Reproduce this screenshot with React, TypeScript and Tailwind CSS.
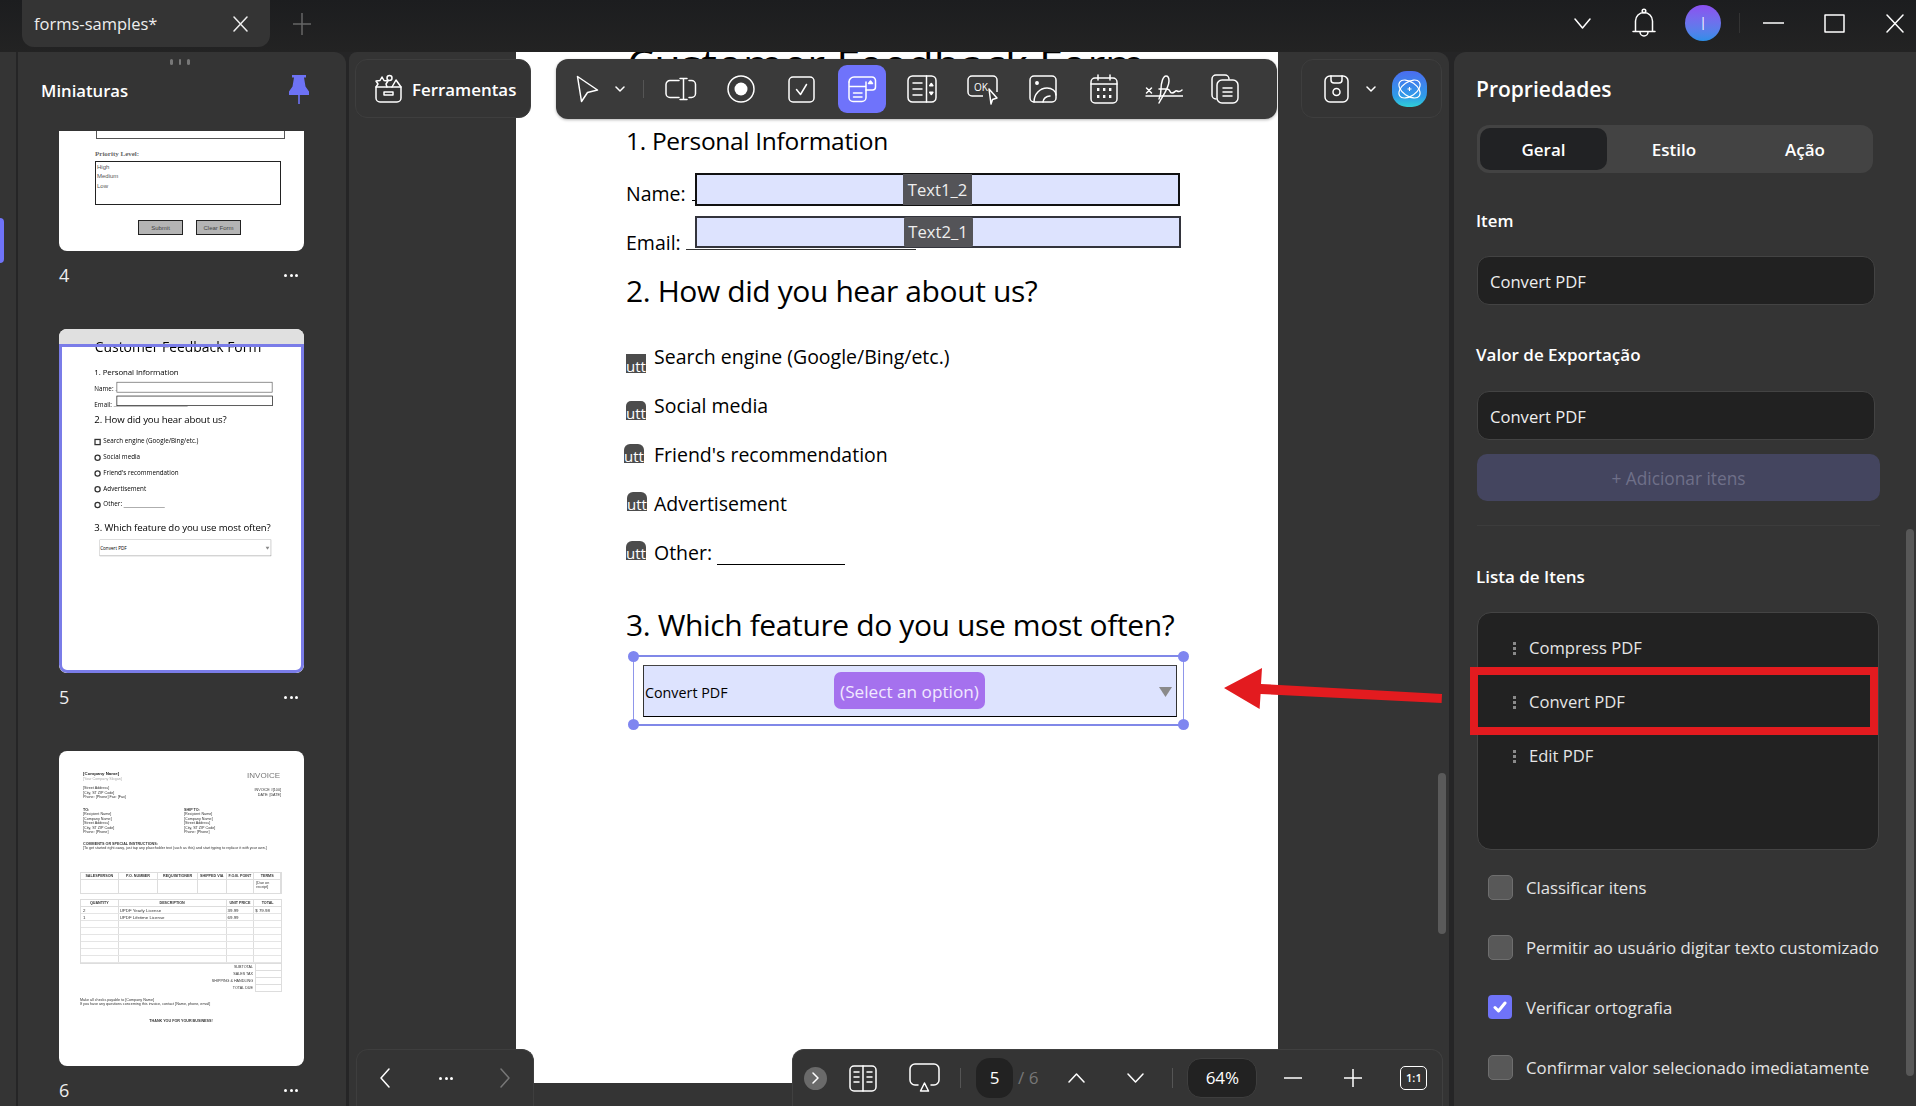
import React from "react";

const S = ({ w, h, children, className = "" }: { w: number; h: number; children: React.ReactNode; className?: string }) => (
  <svg width={w} height={h} viewBox={`0 0 ${w} ${h}`} fill="none" stroke="currentColor" strokeWidth={1.5} strokeLinecap="round" strokeLinejoin="round" className={`shrink-0 ${className}`}>
    {children}
  </svg>
);

const Chevron = ({ w = 10, h = 6, up = false, cls = "" }: { w?: number; h?: number; up?: boolean; cls?: string }) => (
  <S w={w} h={h} className={cls}>
    {up ? <path d={`M1 ${h - 1}L${w / 2} 1L${w - 1} ${h - 1}`} /> : <path d={`M1 1L${w / 2} ${h - 1}L${w - 1} 1`} />}
  </S>
);

function PageContent({ thumb = false }: { thumb?: boolean }) {
  const rows = [
    ["Search engine (Google/Bing/etc.)", "ml-0 mt-[12px] rounded-none"],
    ["Social media", "ml-0 mt-[8px] rounded-t-[5px]"],
    ["Friend's recommendation", "-ml-[2px] -mt-[3px] rounded-t-[6px]"],
    ["Advertisement", "ml-[1px] -mt-[5px] rounded-t-[6px]"],
    ["Other:", "ml-0 -mt-[5px] rounded-t-[6px]"],
  ];
  return (
    <div className="w-[762px] pl-[110px] text-black">
      <div className="-mt-[17px] h-[60px] whitespace-nowrap pl-[1px] text-[43.3px] leading-[60px]">Customer Feedback Form</div>
      <div className="mt-[28px] h-9 whitespace-nowrap text-[24.5px] leading-9 tracking-[-0.3px]">1. Personal Information</div>
      <div className="mt-[14px] flex h-[33px]">
        <div className="mt-[7px] w-[69px] whitespace-nowrap text-[19.5px] leading-7">
          Name:<span className="ml-[6px] inline-block h-[18px] w-[6px] border-b border-black align-baseline" />
        </div>
        <div className={`relative flex h-[33px] w-[485px] items-center justify-center border-2 ${thumb ? "border-[#555] bg-white" : "border-[#111] bg-[#dde3fe]"}`}>
          {!thumb && <span className="flex h-[31px] w-[69px] items-center justify-center bg-[#545458] pt-[1px] text-[16.6px] text-[#eee]">Text1_2</span>}
        </div>
      </div>
      <div className="mt-[10px] flex h-[32px]">
        <div className="relative mt-[13px] w-[69px] whitespace-nowrap text-[19.5px] leading-7">
          Email:<span className="ml-[5px] inline-block h-[18px] w-[230px] border-b border-[#333] align-baseline" />
        </div>
        <div className={`relative flex h-[32px] w-[486px] items-center justify-center border-2 ${thumb ? "border-black bg-white" : "border-[#33343c] bg-[#dde3fe]"}`}>
          {!thumb && <span className="flex h-[30px] w-[69px] items-center justify-center rounded-[2px] bg-[#545458] text-[16.6px] text-[#eee]">Text2_1</span>}
        </div>
      </div>
      <div className="mt-[21px] h-11 whitespace-nowrap text-[30px] leading-[44px] tracking-[-0.4px]">2. How did you hear about us?</div>
      <div className="mt-[29px] flex flex-col gap-[19px]">
        {rows.map(([t, pos], i) => (
          <div key={t} className="flex h-[30px] items-center whitespace-nowrap text-[19.5px] leading-[30px]">
            <span className="w-7 shrink-0">
              {thumb ? (
                <span className={`mt-[6px] block h-5 w-5 border-[4px] border-[#333] ${i === 0 ? "rounded-none" : "rounded-full"}`} />
              ) : (
                <span className={`${pos} block h-[19px] w-5 overflow-hidden bg-[#4c4c4c] text-center text-[15px] leading-[24px] text-white`}>utt</span>
              )}
            </span>
            <span>{t}</span>
            {t === "Other:" && <span className="ml-[5px] mt-[6px] inline-block h-[18px] w-[128px] border-b border-black" />}
          </div>
        ))}
      </div>
      <div className="mt-[35px] h-11 whitespace-nowrap text-[30px] leading-[44px] tracking-[-0.38px]">3. Which feature do you use most often?</div>
      <div className={`relative ml-[7px] mt-2 h-[71px] w-[551px] pl-[9px] pt-2 ${thumb ? "" : "border-x border-y-2 border-x-[#8f96ea] border-y-[#8088e8]"}`}>
        {!thumb && (
          <>
            <span className="absolute -left-[6px] -top-[6px] h-[11px] w-[11px] rounded-full bg-[#7f86f0]" />
            <span className="absolute -right-[6px] -top-[6px] h-[11px] w-[11px] rounded-full bg-[#7f86f0]" />
            <span className="absolute -bottom-[6px] -left-[6px] h-[11px] w-[11px] rounded-full bg-[#7f86f0]" />
            <span className="absolute -bottom-[6px] -right-[6px] h-[11px] w-[11px] rounded-full bg-[#7f86f0]" />
          </>
        )}
        <div className={`relative flex h-[52px] w-[534px] items-center border-[1.5px] border-x-[#333] border-b-black border-t-[#444] pl-[1px] pt-[3px] text-[14.3px] ${thumb ? "bg-white" : "bg-[#dde3fe]"}`}>
          Convert PDF
          {!thumb && (
            <span className="absolute left-[190px] top-[6px] flex h-[37px] w-[151px] items-center justify-center rounded-[7px] bg-[#a571ee] pt-[3px] text-[17.2px] text-[#f1e9ff]">(Select an option)</span>
          )}
          <svg width="13" height="10" viewBox="0 0 13 10" className="absolute right-[4px] top-[21px]"><path d="M0 0h13L6.5 10z" fill="#8a8a8a" /></svg>
        </div>
      </div>
    </div>
  );
}

function Invoice() {
  const cols1 = ["SALESPERSON", "P.O. NUMBER", "REQUISITIONER", "SHIPPED VIA", "F.O.B. POINT", "TERMS"];
  const w1 = ["w-[38px]", "w-[40px]", "w-[40px]", "w-[29px]", "w-[28px]", "w-[27px]"];
  const body = [
    ["2", "UPDF Yearly License", "39.99", "$ 79.98"],
    ["1", "UPDF Lifetime License", "69.99", ""],
    ["", "", "", ""], ["", "", "", ""], ["", "", "", ""], ["", "", "", ""], ["", "", "", ""], ["", "", "", ""],
  ];
  const totals = ["SUBTOTAL", "SALES TAX", "SHIPPING & HANDLING", "TOTAL DUE"];
  return (
    <div className="h-full w-[224px] pl-[21px] pt-[21px] font-['Liberation_Sans',sans-serif] text-[3.7px] leading-[4.5px] text-[#333] blur-[0.35px]">
      <div className="flex justify-between pl-[3px] pr-[3px]">
        <div>
          <div className="text-[4.4px] font-bold text-[#222]">[Company Name]</div>
          <div className="text-[#aaa]">[Your Company Slogan]</div>
        </div>
        <div className="text-[8px] leading-[8px] text-[#777]">INVOICE</div>
      </div>
      <div className="mt-[5px] flex justify-between pl-[3px] pr-[2px]">
        <div><div>[Street Address]</div><div>[City, ST ZIP Code]</div><div>Phone: [Phone] Fax: [Fax]</div></div>
        <div className="mt-[2px] text-right"><div>INVOICE #[100]</div><div>DATE: [DATE]</div></div>
      </div>
      <div className="mt-[8px] flex pl-[3px]">
        <div className="w-[101px]"><div className="font-bold">TO:</div><div>[Recipient Name]</div><div>[Company Name]</div><div>[Street Address]</div><div>[City, ST ZIP Code]</div><div>Phone: [Phone]</div></div>
        <div><div className="font-bold">SHIP TO:</div><div>[Recipient Name]</div><div>[Company Name]</div><div>[Street Address]</div><div>[City, ST ZIP Code]</div><div>Phone: [Phone]</div></div>
      </div>
      <div className="mt-[7px] pl-[3px]">
        <div className="font-bold">COMMENTS OR SPECIAL INSTRUCTIONS:</div>
        <div className="whitespace-nowrap">[To get started right away, just tap any placeholder text (such as this) and start typing to replace it with your own.]</div>
      </div>
      <div className="mt-[21px] w-[202px] border border-[#ddd]">
        <div className="flex h-[7px] border-b border-[#ddd] text-center font-bold">
          {cols1.map((c, i) => <div key={c} className={`${w1[i]} border-r border-[#ddd] leading-[7px]`}>{c}</div>)}
        </div>
        <div className="flex h-[13px]">
          {w1.map((w, i) => <div key={i} className={`${w} border-r border-[#ddd] pl-[2px] pt-[1px]`}>{i === 5 ? "[Due on receipt]" : ""}</div>)}
        </div>
      </div>
      <div className="mt-[5px] w-[202px] border border-[#ddd]">
        <div className="flex h-[7px] border-b border-[#ddd] text-center font-bold leading-[7px]">
          <div className="w-[38px] border-r border-[#ddd]">QUANTITY</div><div className="w-[109px] border-r border-[#ddd]">DESCRIPTION</div><div className="w-[28px] border-r border-[#ddd]">UNIT PRICE</div><div className="w-[27px]">TOTAL</div>
        </div>
        {body.map((r, i) => (
          <div key={i} className="flex h-[7px] border-b border-[#e5e5e5] text-[4.4px] leading-[7px]">
            <div className="w-[38px] border-r border-[#ddd] pl-[2px]">{r[0]}</div><div className="w-[109px] border-r border-[#ddd] pl-[1px]">{r[1]}</div><div className="w-[28px] border-r border-[#ddd] pl-[1px]">{r[2]}</div><div className="w-[27px] pl-[1px]">{r[3]}</div>
          </div>
        ))}
      </div>
      <div className="w-[202px]">
        {totals.map((t) => (
          <div key={t} className="flex h-[7px] justify-end leading-[7px]">
            <span className="mr-[2px]">{t}</span><span className="w-[27px] border-b border-l border-r border-[#ddd]" />
          </div>
        ))}
      </div>
      <div className="mt-[6px]"><div>Make all checks payable to [Company Name]</div><div>If you have any questions concerning this invoice, contact [Name, phone, email]</div></div>
      <div className="mt-[12px] w-[202px] text-center font-bold">THANK YOU FOR YOUR BUSINESS!</div>
    </div>
  );
}

const Dots = ({ dim = false }: { dim?: boolean }) => (
  <span className="flex gap-[2.5px]">
    <i className={`block h-[3px] w-[3px] rounded-full ${dim ? "bg-[#bbb]" : "bg-white"}`} />
    <i className={`block h-[3px] w-[3px] rounded-full ${dim ? "bg-[#bbb]" : "bg-white"}`} />
    <i className={`block h-[3px] w-[3px] rounded-full ${dim ? "bg-[#bbb]" : "bg-white"}`} />
  </span>
);

const ThumbLabel = ({ n }: { n: string }) => (
  <div className="mt-[12px] flex h-6 w-[239px] items-center justify-between text-[18px] text-[#eee]">
    <span>{n}</span>
    <Dots />
  </div>
);

function LeftPanel() {
  return (
    <div className="relative w-[328px] overflow-hidden rounded-tr-[12px] bg-[#343434]">
      <div className="absolute left-[152px] top-[7px] flex gap-[6px]">
        <i className="block h-[6px] w-[2.5px] rounded-sm bg-[#777]" />
        <i className="block h-[6px] w-[2.5px] rounded-sm bg-[#777]" />
        <i className="block h-[6px] w-[2.5px] rounded-sm bg-[#777]" />
      </div>
      <div className="flex h-[79px] items-start justify-between pl-[23px] pr-[37px] pt-[26px]">
        <span className="text-[16.7px] font-semibold leading-[26px] text-white">Miniaturas</span>
        <svg width="20" height="29" viewBox="0 0 20 29" className="-mt-[3px]">
          <path d="M3 0h14v2.5h-2l1.5 9 3.5 5V20H0v-3.5l3.5-5 1.5-9H3z" fill="#6d72f5" />
          <path d="M9.2 20h1.6v9H9.2z" fill="#6d72f5" />
        </svg>
      </div>
      <div className="pl-[41px]">
        <div className="h-[120px] w-[245px] overflow-hidden rounded-b-[8px] bg-white font-['Liberation_Serif',serif] text-[#555]">
          <div className="ml-[37px] h-[8px] w-[189px] border-x border-b border-[#555]" />
          <div className="ml-[36px] mt-[11px] text-[7px] font-bold leading-[8px] text-[#666]">Priority Level:</div>
          <div className="ml-[36px] mt-[3px] h-[44px] w-[186px] border border-[#222] pl-[1px] pt-[1px] font-['Liberation_Sans',sans-serif] text-[6px] leading-[9.3px] text-[#555]">
            <div>High</div><div>Medium</div><div>Low</div>
          </div>
          <div className="mt-[15px] flex gap-[13px] pl-[79px] font-['Liberation_Sans',sans-serif] text-[6px] leading-[14px] text-[#444]">
            <span className="block h-[15px] w-[45px] border border-[#222] bg-[#b4b4b4] text-center">Submit</span>
            <span className="block h-[15px] w-[45px] border border-[#222] bg-[#b4b4b4] text-center">Clear Form</span>
          </div>
        </div>
        <ThumbLabel n="4" />
        <div className="relative mt-[42px] h-[344px] w-[245px] overflow-hidden rounded-[8px] bg-white">
          <div className="h-[15px] bg-[#e0e0e0]" />
          <div className="absolute left-0 top-[14px] origin-top-left scale-[0.3215]">
            <PageContent thumb />
          </div>
          <div className="absolute inset-x-0 bottom-0 top-[15px] rounded-b-[8px] border-[3px] border-[#7a7ce8]" />
        </div>
        <ThumbLabel n="5" />
        <div className="mt-[42px] h-[315px] w-[245px] overflow-hidden rounded-[8px] bg-white">
          <Invoice />
        </div>
        <ThumbLabel n="6" />
      </div>
    </div>
  );
}

function Toolbar() {
  return (
    <div className="absolute left-[6px] right-[7px] top-[7px] z-10 flex h-[60px] items-start">
      <div className="flex h-[59px] w-[176px] items-center rounded-[12px] border border-[#3e3e3e] bg-[#343434] pl-[18px] text-white">
        <S w={29} h={29}>
          <path d="M2 13h25v11a4 4 0 0 1-4 4H6a4 4 0 0 1-4-4z" />
          <path d="M10 18h9v3h-9z" />
          <path d="M2 13l2-3-2-3 4-.5L8 3l2 3.5 4 .5-2 3 1 3" />
          <circle cx="15.5" cy="4" r="2.5" />
          <path d="M18 13l4-7 5 7" />
        </S>
        <span className="ml-[9px] whitespace-nowrap pt-[3px] text-[16.9px] font-semibold">Ferramentas</span>
      </div>
      <div className="ml-[25px] flex h-[60px] w-[721px] items-center rounded-[12px] bg-[#3a3a3a] pl-[20px] text-white shadow-[0_1px_3px_rgba(0,0,0,0.3)]">
        <S w={23} h={28}>
          <path d="M1.5 1.5L21.5 15 11.5 17.5 5.5 26.5z" />
        </S>
        <Chevron cls="ml-[16px]" />
        <span className="ml-[18px] block h-[18px] w-px bg-[#555]" />
        <div className="ml-[12px] flex items-center gap-[12.5px]">
          <span className="flex h-12 w-12 items-center justify-center">
            <S w={33} h={24}>
              <path d="M15 3.5H6a4 4 0 0 0-4 4v9a4 4 0 0 0 4 4h9M25 3.5h2.5a4 4 0 0 1 4 4v9a4 4 0 0 1-4 4H25" />
              <path d="M16 1.5h7M19.5 1.5v21M16 22.5h7" />
            </S>
          </span>
          <span className="flex h-12 w-12 items-center justify-center">
            <S w={28} h={28}>
              <circle cx="14" cy="14" r="13" />
              <circle cx="14" cy="14" r="6.5" fill="white" stroke="none" />
            </S>
          </span>
          <span className="flex h-12 w-12 items-center justify-center">
            <S w={27} h={27}>
              <rect x="1" y="1" width="25" height="25" rx="4" />
              <path d="M8.5 13.5l4 5 6-10" />
            </S>
          </span>
          <span className="flex h-12 w-12 items-center justify-center rounded-[9px] bg-[#6f73fb]">
            <S w={30} h={28}>
              <path d="M2 7a5 5 0 0 1 5-5h18a3.5 3.5 0 0 1 3.5 3.5v6.5a3 3 0 0 1-3 3H19" />
              <path d="M2 11.5h17M2 7v15.5a4 4 0 0 0 4 4h9a4 4 0 0 0 4-4V7" />
              <path d="M6.5 18h8.5M6.5 22h8.5" />
              <path d="M23.5 6l2 2.5h-4z" fill="white" />
            </S>
          </span>
          <span className="flex h-12 w-12 items-center justify-center">
            <S w={30} h={28}>
              <rect x="1" y="1" width="28" height="26" rx="4.5" />
              <path d="M19.5 1v26M6 8h9M6 14h9M6 20h9" />
              <path d="M24.3 8.5l1.6 2.2h-3.2zM24.3 19.5l1.6-2.2h-3.2z" fill="white" />
            </S>
          </span>
          <span className="flex h-12 w-12 items-center justify-center">
            <svg width="34" height="32" viewBox="0 0 34 32" fill="none" stroke="white" strokeWidth="1.5" strokeLinejoin="round" className="shrink-0">
              <path d="M17 23H6a4 4 0 0 1-4-4V7a4 4 0 0 1 4-4h21a4 4 0 0 1 4 4v12" />
              <text x="8" y="17.5" fontSize="10" fill="white" stroke="none" fontFamily="Open Sans">OK</text>
              <path d="M23 16l8 9-4.5 1.5L25 31z" />
            </svg>
          </span>
          <span className="flex h-12 w-12 items-center justify-center">
            <S w={28} h={28}>
              <rect x="1" y="1" width="26" height="26" rx="4" />
              <circle cx="8" cy="8" r="1.2" fill="white" />
              <path d="M5 27c0-8 6-14 13-14 5 0 9 3 9 7" />
              <path d="M14 27c0-3 3-6 7-6" />
            </S>
          </span>
          <span className="flex h-12 w-12 items-center justify-center">
            <S w={28} h={30}>
              <rect x="1" y="4" width="26" height="25" rx="4" />
              <path d="M1 10h26M8 1v5M20 1v5" />
              <g fill="white" stroke="none">
                <rect x="7" y="14" width="2.4" height="3" /><rect x="13" y="14" width="2.4" height="3" /><rect x="19" y="14" width="2.4" height="3" />
                <rect x="7" y="21" width="2.4" height="3" /><rect x="13" y="21" width="2.4" height="3" /><rect x="19" y="21" width="2.4" height="3" />
              </g>
            </S>
          </span>
          <span className="flex h-12 w-12 items-center justify-center">
            <S w={38} h={30}>
              <path d="M1 22h37" />
              <path d="M1.5 14l5 5M6.5 14l-5 5" />
              <path d="M14 29c3-6 10-15 10-22 0-3-1-5-3-5-3 0-5 7-5 13 0 4-1 8-2 10M14 15h8c4 0 2 4 5 4s3-3 5-2 3 1 5-1" />
            </S>
          </span>
          <span className="flex h-12 w-12 items-center justify-center">
            <S w={28} h={30}>
              <path d="M5 25a4 4 0 0 1-4-4V5a4 4 0 0 1 4-4h9a4 4 0 0 1 4 4" />
              <rect x="6" y="6" width="21" height="23" rx="5" />
              <path d="M12 14h9M12 18h9M12 22h9" />
            </S>
          </span>
        </div>
      </div>
      <div className="ml-[24px] flex h-[59px] w-[141px] items-center rounded-[12px] border border-[#3e3e3e] bg-[#343434] pl-[22px] text-white">
        <S w={25} h={28}>
          <rect x="1" y="1" width="23" height="26" rx="5" />
          <path d="M7 1v4a3 3 0 0 0 3 3h5a3 3 0 0 0 3-3V1" />
          <circle cx="12.5" cy="17" r="3.5" />
        </S>
        <Chevron cls="ml-[17px]" />
        <svg width="36" height="36" viewBox="0 0 36 36" fill="none" className="ml-[16px] shrink-0">
          <defs>
            <linearGradient id="ai" x1="0" y1="0" x2="0" y2="1">
              <stop offset="0" stopColor="#4b6df0" /><stop offset="0.7" stopColor="#2f9be8" /><stop offset="1" stopColor="#30d0d8" />
            </linearGradient>
          </defs>
          <rect width="35" height="36" rx="15" fill="url(#ai)" />
          <g stroke="white" strokeWidth="1.1">
            <ellipse cx="17.5" cy="18" rx="12" ry="7" transform="rotate(35 17.5 18)" />
            <ellipse cx="17.5" cy="18" rx="12" ry="7" transform="rotate(-35 17.5 18)" />
            <path d="M15.5 18h4M17.5 16v4" />
          </g>
        </svg>
      </div>
    </div>
  );
}

function BottomBar() {
  return (
    <div className="absolute bottom-0 left-[7px] right-[6px] z-10 flex h-[57px] items-center text-white">
      <div className="flex h-[57px] w-[178px] items-center rounded-t-[12px] border border-b-0 border-[#3e3e3e] bg-[#343434] pl-[23px]">
        <S w={10} h={20}><path d="M9 1L1 10l8 9" /></S>
        <span className="ml-[49px]"><Dots /></span>
        <S w={10} h={20} className="ml-[47px] text-[#777]"><path d="M1 1l8 9-8 9" /></S>
      </div>
      <div className="ml-[258px] flex h-[57px] w-[651px] items-center rounded-t-[12px] border border-b-0 border-[#404040] bg-[#343434] pl-[11px]">
        <span className="flex h-[23px] w-[23px] items-center justify-center rounded-full bg-[#6a6a6a]">
          <S w={7} h={12}><path d="M1 1l5 5-5 5" /></S>
        </span>
        <S w={28} h={27} className="ml-[22px]">
          <rect x="1" y="1" width="26" height="25" rx="4" />
          <path d="M14 1v25M5 7h5M5 12h5M5 17h5M18 7h5M18 12h5M18 17h5" />
        </S>
        <S w={31} h={30} className="ml-[32px]">
          <path d="M9 22H6a5 5 0 0 1-5-5V6a5 5 0 0 1 5-5h19a5 5 0 0 1 5 5v11a5 5 0 0 1-5 5h-3" />
          <path d="M15.5 20l4 8h-8z" />
        </S>
        <span className="ml-[20px] block h-5 w-px bg-[#555]" />
        <span className="ml-[15px] flex h-10 w-[37px] items-center justify-center rounded-[14px] bg-[#222] text-[17px]">5</span>
        <span className="ml-[5px] whitespace-nowrap text-[17px] text-[#777]">/ 6</span>
        <Chevron w={17} h={10} up cls="ml-[30px]" />
        <Chevron w={17} h={10} cls="ml-[42px]" />
        <span className="ml-[28px] block h-5 w-px bg-[#555]" />
        <span className="ml-[14px] flex h-10 w-[70px] items-center justify-center rounded-[14px] border border-[#3e3e3e] bg-[#222] text-[17px]">64%</span>
        <S w={18} h={2} className="ml-[27px]"><path d="M0 1h18" /></S>
        <S w={18} h={18} className="ml-[42px]"><path d="M0 9h18M9 0v18" /></S>
        <span className="ml-[38px] flex h-6 w-[27px] items-center justify-center rounded-[5px] border-[1.5px] border-white text-[11px] font-semibold">1:1</span>
      </div>
    </div>
  );
}

function RightPanel() {
  const items = ["Compress PDF", "Convert PDF", "Edit PDF"];
  const checks: [string, boolean][] = [
    ["Classificar itens", false],
    ["Permitir ao usuário digitar texto customizado", false],
    ["Verificar ortografia", true],
    ["Confirmar valor selecionado imediatamente", false],
  ];
  return (
    <div className="relative w-[462px] overflow-hidden rounded-tl-[12px] bg-[#343434] pl-[23px] pt-6 text-white">
      <div className="-ml-[1px] -mt-[1px] pb-[1px] text-[21px] font-semibold leading-7">Propriedades</div>
      <div className="mt-[21px] flex h-12 w-[396px] items-center rounded-[12px] bg-[#434343] pl-[3px] text-[17px] font-semibold">
        <span className="flex h-[42px] w-[127px] items-center justify-center rounded-[10px] bg-[#212224] pt-[2px]">Geral</span>
        <span className="w-[134px] pt-[2px] text-center">Estilo</span>
        <span className="w-[128px] pt-[2px] text-center">Ação</span>
      </div>
      <div className="-ml-[1px] mt-9 text-[16.8px] font-semibold leading-6">Item</div>
      <div className="mt-[23px] flex h-[49px] w-[398px] items-center rounded-[12px] border border-[#434343] bg-[#212121] pl-3 pt-[3px] text-[16.6px] text-[#eee]">Convert PDF</div>
      <div className="-ml-[1px] mt-[38px] text-[17px] font-semibold leading-6">Valor de Exportação</div>
      <div className="mt-6 flex h-[49px] w-[398px] items-center rounded-[12px] border border-[#434343] bg-[#212121] pl-3 pt-[3px] text-[16.6px] text-[#eee]">Convert PDF</div>
      <div className="mt-[14px] flex h-[47px] w-[403px] items-center justify-center rounded-[10px] bg-[#44455f] pt-[2px] text-[17.3px] text-[#6f7089]">+ Adicionar itens</div>
      <div className="mt-6 h-px w-[403px] bg-[#3c3c3c]" />
      <div className="-ml-[1px] mt-[39px] text-[17px] font-semibold leading-6">Lista de Itens</div>
      <div className="mt-[23px] h-[238px] w-[402px] rounded-[14px] border border-[#444] bg-[#222] pt-[8px]">
        {items.map((t) => (
          <div key={t} className="flex h-[54px] items-center pl-[35px] text-[16.6px] text-[#e6e6e6]">
            <span className="flex w-[3px] flex-col gap-[2px]">
              <i className="block h-[3px] w-[3px] bg-[#8a8a8a]" />
              <i className="block h-[3px] w-[3px] bg-[#8a8a8a]" />
              <i className="block h-[3px] w-[3px] bg-[#8a8a8a]" />
            </span>
            <span className="ml-[13px]">{t}</span>
          </div>
        ))}
      </div>
      <div className="mt-[7px] pl-[11px]">
        {checks.map(([t, on]) => (
          <div key={t} className="flex h-[60px] items-center">
            {on ? (
              <span className="flex h-[24px] w-[24px] items-center justify-center rounded-[4px] bg-[#6f73f8]">
                <svg width="14" height="12" viewBox="0 0 14 12" fill="none" stroke="white" strokeWidth="3" strokeLinecap="round" strokeLinejoin="round"><path d="M2 6.5l3.5 3.5L12 2" /></svg>
              </span>
            ) : (
              <span className="block h-[25px] w-[25px] rounded-[5px] border border-[#6e6e6e] bg-[#585858]" />
            )}
            <span className={`${on ? "ml-[14px]" : "ml-[13px]"} whitespace-nowrap pt-[1px] text-[16.75px] text-[#e4e4e4]`}>{t}</span>
          </div>
        ))}
      </div>
      <div className="absolute right-[2px] top-[477px] h-[547px] w-2 rounded-full bg-[#585858]" />
    </div>
  );
}

export default function App() {
  return (
    <div className="relative flex h-[1106px] w-[1916px] flex-col overflow-hidden bg-[#252526] font-['Open_Sans',sans-serif]">
      <header className="flex h-[52px] shrink-0 items-start bg-gradient-to-b from-[#1c1d1f] to-[#232323] text-white">
        <div className="ml-[22px] flex h-[47px] w-[248px] items-center rounded-b-[12px] bg-[#343434] pl-3 pr-[22px] pt-[1px] text-[#eee]">
          <span className="flex-1 text-[16.5px]">forms-samples*</span>
          <S w={15} h={16}><path d="M1 1l13 14M14 1L1 15" /></S>
        </div>
        <S w={18} h={22} className="ml-[23px] mt-[13px] text-[#666]"><path d="M0 11h18M9 0v22" /></S>
        <div className="ml-auto mt-[5px] flex items-center">
          <Chevron w={17} h={11} />
          <S w={24} h={30} className="ml-[41px]">
            <circle cx="12" cy="3" r="1.8" />
            <path d="M3.5 23V13a8.5 8.5 0 0 1 17 0v10M1 23.5h22M8 24a4 4 0 0 0 8 0" />
          </S>
          <span className="ml-[29px] flex h-9 w-9 items-center justify-center rounded-full bg-gradient-to-b from-[#8b4ff0] to-[#2a8ee8] text-[18px] font-light">I</span>
          <span className="ml-[18px] block h-5 w-px bg-[#333]" />
          <S w={21} h={2} className="ml-[23px]"><path d="M0 1h21" /></S>
          <S w={21} h={19} className="ml-[40px]"><path d="M1 1h19v17H1z" /></S>
          <S w={18} h={19} className="ml-[41px] mr-[12px]"><path d="M1 1l16 17M17 1L1 18" /></S>
        </div>
      </header>
      <main className="flex min-h-0 flex-1">
        <div className="relative w-4 bg-[#343434]">
          <span className="absolute left-0 top-[166px] block h-[45px] w-1 rounded-r-[4px] bg-[#6f73f8]" />
        </div>
        <div className="w-[2px]" />
        <LeftPanel />
        <div className="w-[3px]" />
        <div className="relative w-[1100px] overflow-hidden rounded-tl-[8px] rounded-tr-[12px] bg-[#343434]">
          <div className="ml-[167px] h-[1031px] w-[762px] overflow-hidden bg-white">
            <PageContent />
          </div>
          <Toolbar />
          <BottomBar />
          <div className="absolute right-[3px] top-[721px] h-[161px] w-2 rounded-full bg-[#5a5a5a]" />
        </div>
        <div className="w-[5px]" />
        <RightPanel />
      </main>
      <div className="absolute left-[1470px] top-[667px] h-[68px] w-[408px] border-[8px] border-[#e31b1f]" />
      <svg width="222" height="44" viewBox="0 0 222 44" className="absolute left-[1222px] top-[666px]">
        <path d="M2 22L40 2l-1 16 181 10-.4 9-181-9-1 15z" fill="#e31b1f" />
      </svg>
    </div>
  );
}
